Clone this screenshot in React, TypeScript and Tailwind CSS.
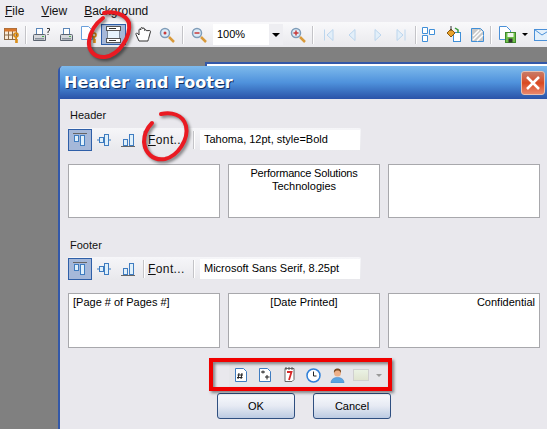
const ui = { fontFamily: '"Liberation Sans", "DejaVu Sans", sans-serif' };

function Sep({ className = "" }: { className?: string }) {
  return <div className={`w-[2px] h-[18px] bg-[#c4c4c8] border-r border-white shrink-0 ${className}`} />;
}

function Icon({ w = 16, h = 16, className = "", children }: { w?: number; h?: number; className?: string; children: React.ReactNode }) {
  return (
    <svg width={w} height={h} viewBox={`0 0 ${w} ${h}`} className={`shrink-0 ${className}`}>
      {children}
    </svg>
  );
}

const Key = ({ x = 0, y = 0 }: { x?: number; y?: number }) => (
  <g transform={`translate(${x} ${y})`} fill="none" stroke="#d98a10" strokeWidth="1.6">
    <circle cx="3" cy="3" r="2" />
    <path d="M3 5v6M3 8h2M3 10h2" />
  </g>
);

function Printer({ help = false }: { help?: boolean }) {
  return (
    <Icon w={18} h={16}>
      <rect x="3.500" y="1.500" width="6" height="6" fill="#fff" stroke="#5b86b8" />
      <path d="M1.500 7.500h10a1 1 0 0 1 1 1v5h-12v-5a1 1 0 0 1 1-1z" fill="#d6d8dc" stroke="#5c6470" />
      <rect x="2" y="11" width="9" height="1.500" fill="#8a929c" />
      <rect x="9" y="9" width="2" height="1" fill="#49b049" />
      {help && <path d="M14 1.500h2.500v2l-1.500 1v1.500M15 7v1" fill="none" stroke="#333" strokeWidth="1" />}
    </Icon>
  );
}

function MainToolbar() {
  return (
    <div className="h-[25px] flex items-center bg-gradient-to-b from-[#f9f9fb] to-[#e9e9ed] pl-[4px] overflow-hidden">
      <Icon w={16} h={16} className="mr-[5px]">
        <rect x="0.500" y="1.500" width="12" height="11" fill="#f8ead8" stroke="#8c6a48" />
        <path d="M0.500 8h12M4.500 1.500v11M8.500 1.500v11" stroke="#8c6a48" fill="none" />
        <rect x="0.500" y="1.500" width="12" height="3" fill="#d9772b" />
        <Key x={9} y={5} />
      </Icon>
      <Sep className="mr-[6px]" />
      <Printer help />
      <div className="w-[9px] shrink-0" />
      <Printer />
      <div className="w-[3px] shrink-0" />
      <Icon w={17} h={18} className="mr-[3px]">
        <path d="M0.500 0.500h7l4 4v9h-11z" fill="#fff" stroke="#6aa0dc" />
        <Key x={10} y={6} />
      </Icon>
      <div className="w-[25px] h-[21px] bg-[#a5b8d9] border border-[#2f5fa8] flex items-center justify-center shrink-0 mr-[9px]">
        <Icon w={15} h={17}>
          <rect x="1.500" y="0.500" width="12" height="16" fill="#e6f3fc" stroke="#7d8896" />
          <rect x="0.500" y="0.500" width="14" height="4" fill="#fff" stroke="#555" />
          <rect x="0.500" y="12.500" width="14" height="4" fill="#fff" stroke="#555" />
          <path d="M3 2.500h7M3 14.500h7" stroke="#333" />
        </Icon>
      </div>
      <Icon w={17} h={17} className="mr-[7px]">
        <path d="M4 15 1 8.500c-.6-1.400 1-2 1.800-.8L4 9V4c0-1.300 1.700-1.300 1.800 0V2.500c0-1.300 1.900-1.300 2 0V3c0-1.300 1.800-1.200 1.900.1V4.500c.2-1.200 1.800-1 1.800.2L14 4.600c1-.3 1.700.3 1.400 1.400L14 11c-.4 2-1 3-1 4z" fill="#fff" stroke="#333" />
      </Icon>
      <Icon w={16} h={16} className="mr-[7px]">
        <circle cx="6" cy="6" r="4.500" fill="#dcecf8" stroke="#7f9cb8" strokeWidth="1.500" />
        <circle cx="6" cy="6" r="1.500" fill="#c83a3a" />
        <path d="m10 10 5 5" stroke="#d99a3a" strokeWidth="2.500" />
      </Icon>
      <Sep className="mr-[7px]" />
      <Icon w={16} h={16} className="mr-[6px]">
        <circle cx="6" cy="6" r="4.500" fill="#dcecf8" stroke="#7f9cb8" strokeWidth="1.500" />
        <path d="M3.500 6h5" stroke="#c83a3a" strokeWidth="1.500" />
        <path d="m10 10 5 5" stroke="#d99a3a" strokeWidth="2.500" />
      </Icon>
      <div className="w-[70px] h-[21px] bg-white flex items-center justify-between shrink-0 mr-[7px]">
        <span className="pl-[4px] text-[11px] text-black">100%</span>
        <div className="w-[14px] h-full bg-[#eeeef2] flex items-center justify-center">
          <div className="w-0 h-0 border-x-[4px] border-x-transparent border-t-[4px] border-t-black" />
        </div>
      </div>
      <Icon w={16} h={16} className="mr-[6px]">
        <circle cx="6" cy="6" r="4.500" fill="#dcecf8" stroke="#7f9cb8" strokeWidth="1.500" />
        <path d="M3.500 6h5M6 3.500v5" stroke="#c83a3a" strokeWidth="1.500" />
        <path d="m10 10 5 5" stroke="#d99a3a" strokeWidth="2.500" />
      </Icon>
      <Sep className="mr-[10px]" />
      <Icon w={10} h={14} className="mr-[14px]">
        <path d="M0.500 1.500v11" stroke="#bcd6ee" />
        <path d="M9 1.500v11L3 7z" fill="#e3eff9" stroke="#bcd6ee" />
      </Icon>
      <Icon w={8} h={14} className="mr-[18px]">
        <path d="M7 1.500v11L1 7z" fill="#e3eff9" stroke="#bcd6ee" />
      </Icon>
      <Icon w={8} h={14} className="mr-[14px]">
        <path d="M1 1.500v11L7 7z" fill="#e3eff9" stroke="#bcd6ee" />
      </Icon>
      <Icon w={10} h={14} className="mr-[9px]">
        <path d="M9 1.500v11" stroke="#bcd6ee" />
        <path d="M1 1.500v11L7 7z" fill="#e3eff9" stroke="#bcd6ee" />
      </Icon>
      <Sep className="mr-[5px]" />
      <Icon w={14} h={16} className="mr-[10px]">
        <path d="M0.500 0.500h5v6h-5zM7.500 2.500h5v5h-5zM0.500 8.500h5v6h-5z" fill="#fff" stroke="#3f8fd8" />
      </Icon>
      <Icon w={16} h={17} className="mr-[9px]">
        <rect x="7.500" y="6.500" width="7" height="9" fill="#fff" stroke="#3f8fd8" />
        <path d="M5 3 1 7l4 4 4-4z" fill="#e8a22c" stroke="#8a5a10" />
        <path d="M5 0v5" stroke="#333" />
        <path d="M9 2l3 2v3" stroke="#3a9a3a" fill="none" strokeWidth="1.500" />
      </Icon>
      <Icon w={13} h={14} className="mr-[6px]">
        <path d="M0.500 0.500h9l3 3v10h-12z" fill="#c8c8c8" stroke="#3f8fd8" />
        <path d="M2 8l6-6M2 12l9-9M6 13l6-6" stroke="#fff" strokeWidth="1.500" />
      </Icon>
      <Sep className="mr-[7px]" />
      <Icon w={17} h={17} className="mr-[6px]">
        <path d="M0.500 0.500h7l4 4v9h-11z" fill="#fff" stroke="#4a90d8" />
        <rect x="6.500" y="6.500" width="10" height="10" fill="#6fc04a" stroke="#3f8a2a" />
        <rect x="8.500" y="7" width="6" height="4" fill="#f0f7ec" />
        <rect x="9.500" y="12.500" width="4" height="4" fill="#333" />
      </Icon>
      <div className="w-0 h-0 border-x-[3px] border-x-transparent border-t-[3px] border-t-black mr-[6px] shrink-0" />
      <Icon w={16} h={12}>
        <rect x="0.500" y="0.500" width="20" height="11" fill="#e3f0fb" stroke="#4a90d8" />
        <path d="M0.500 0.500 8 6l8-5" fill="none" stroke="#4a90d8" />
      </Icon>
    </div>
  );
}

function AlignIcons() {
  return (
    <>
      <div className="w-[24px] h-[22px] bg-[#a5b8d9] border border-[#2f5fa8] flex items-center justify-center">
        <Icon w={14} h={14}>
          <path d="M0 0.500h14" stroke="#666" />
          <rect x="1.500" y="2.500" width="4" height="6" fill="#dff0fb" stroke="#3f7cc0" />
          <rect x="7.500" y="2.500" width="4" height="10" fill="#dff0fb" stroke="#3f7cc0" />
        </Icon>
      </div>
      <div className="w-[24px] h-[22px] flex items-center justify-center">
        <Icon w={14} h={14}>
          <path d="M0 7h14" stroke="#3f7cc0" />
          <rect x="2.500" y="4.500" width="4" height="5" fill="#dff0fb" stroke="#3f7cc0" />
          <rect x="7.500" y="1.500" width="4" height="11" fill="#dff0fb" stroke="#3f7cc0" />
        </Icon>
      </div>
      <div className="w-[24px] h-[22px] flex items-center justify-center">
        <Icon w={14} h={14}>
          <path d="M0 13.500h14" stroke="#666" />
          <rect x="2.500" y="6.500" width="4" height="6" fill="#dff0fb" stroke="#3f7cc0" />
          <rect x="8.500" y="1.500" width="4" height="11" fill="#dff0fb" stroke="#3f7cc0" />
        </Icon>
      </div>
    </>
  );
}

function FontBar({ label, mt }: { label: string; mt: string }) {
  return (
    <div className={`w-[293px] h-[23px] flex items-center rounded-[2px] bg-gradient-to-b from-[#f6f6f9] to-[#e8e8ec] ${mt}`}>
      <AlignIcons />
      <Sep className="ml-[3px] mr-[3px]" />
      <span className="w-[44px] text-[12px] tracking-[0.4px] text-[#111]">
        <u>F</u>ont...
      </span>
      <Sep className="mr-[5px] ml-[1px]" />
      <div className="w-[160px] h-[20px] bg-white flex items-center pl-[4px] text-[11px] text-black">{label}</div>
    </div>
  );
}

function Box({ align = "text-left", height = "h-[55px]", children }: { align?: string; height?: string; children?: React.ReactNode }) {
  return (
    <div className={`w-[152px] ${height} bg-white border border-[#a8a8ac] px-[4px] pt-[2px] text-[11px] leading-[13px] text-black ${align}`}>
      {children}
    </div>
  );
}

function Dialog() {
  return (
    <div className="absolute left-[58px] top-[66px] w-[489px] h-[363px] bg-[#e9e8ed] border-l-2 border-[#3358a8] rounded-tl-[5px] overflow-hidden">
      <div className="h-[33px] flex items-center justify-between bg-gradient-to-b from-[#7ebaec] via-[#4f92dc] to-[#2b53a8] pl-[4px] pr-[2px]">
        <span className="text-[16px] font-bold text-white [text-shadow:1px_1px_0_#12305f]" style={{ fontFamily: '"DejaVu Sans", sans-serif' }}>
          Header and Footer
        </span>
        <div className="w-[24px] h-[24px] rounded-[3px] border border-[#e8c0b0] bg-gradient-to-b from-[#c77a66] via-[#d9491f] to-[#e8866a] flex items-center justify-center">
          <svg width="16" height="16" viewBox="0 0 16 16">
            <path d="m2 2 12 12M14 2 2 14" stroke="#fff" strokeWidth="2.500" />
          </svg>
        </div>
      </div>
      <div className="pl-[8px]">
        <div className="pl-[2px] pt-[9px] text-[11px] leading-[14px] text-[#111]">Header</div>
        <FontBar label="Tahoma, 12pt, style=Bold" mt="mt-[6px]" />
        <div className="flex gap-[8px] mt-[13px]">
          <Box height="h-[54px]" />
          <Box height="h-[54px]" align="text-center">
            <span className="tracking-[-0.2px]">Performance Solutions</span>
            <br />
            Technologies
          </Box>
          <Box height="h-[54px]" />
        </div>
        <div className="pl-[2px] pt-[20px] text-[11px] leading-[14px] text-[#111]">Footer</div>
        <FontBar label="Microsoft Sans Serif, 8.25pt" mt="mt-[5px]" />
        <div className="flex gap-[8px] mt-[13px]">
          <Box>[Page # of Pages #]</Box>
          <Box align="text-center">[Date Printed]</Box>
          <Box align="text-right">Confidential</Box>
        </div>
        <div className="flex items-center w-[472px] h-[24px] mt-[15px]">
          <div className="flex items-center ml-[161px] pl-[6px] pr-[6px] h-[24px] bg-[#e6e6ea]">
            <Icon w={12} h={14} className="mr-[12px]">
              <path d="M0.500 0.500h8l3 3v10h-11z" fill="#fff" stroke="#3f7cc0" />
              <path d="M4 5 3 11M7 5l-1 6M2.500 7H8M2 9.500h5.500" stroke="#222" />
            </Icon>
            <Icon w={12} h={14} className="mr-[12px]">
              <path d="M0.500 0.500h8l3 3v10h-11z" fill="#fff" stroke="#3f7cc0" />
              <path d="M2 4h4M4 2.500v3M6 9h4.500M8 7v4.500" stroke="#222" />
            </Icon>
            <Icon w={13} h={16} className="mr-[10px]">
              <path d="M2 1.500h9v11l-2 2H2z" fill="#fff" stroke="#666" />
              <path d="M3 0v3M6 0v3M9 0v3" stroke="#555" />
              <path d="M4 5h4.500L6 13" fill="none" stroke="#d62828" strokeWidth="1.800" />
            </Icon>
            <Icon w={15} h={15} className="mr-[9px]">
              <circle cx="7.500" cy="7.500" r="6.500" fill="#fff" stroke="#2f7fd8" strokeWidth="1.500" />
              <path d="M7.500 3.500v4.500h3" fill="none" stroke="#222" />
            </Icon>
            <Icon w={15} h={15} className="mr-[8px]">
              <path d="M1 15c0-4 3-5.500 6.500-5.500S14 11 14 15z" fill="#5aa4e0" stroke="#3f7cc0" strokeWidth="0.500" />
              <circle cx="7.500" cy="5" r="3.500" fill="#eeb088" />
              <path d="M4 5c-.5-3.500 1.500-4.500 3.500-4.500s4 1 3.500 4.500c-1-2-2-2.500-3.500-2.500S5 3 4 5z" fill="#7a4a20" />
            </Icon>
            <div className="w-[16px] h-[12px] bg-gradient-to-b from-[#eaf2e4] to-[#e0e4d0] border border-[#d0d0d0] mr-[7px]" />
            <div className="w-0 h-0 border-x-[3px] border-x-transparent border-t-[3px] border-t-[#999]" />
          </div>
        </div>
        <div className="flex gap-[18px] pl-[149px] mt-[6px]">
          {["OK", "Cancel"].map((b) => (
            <button key={b} className="w-[78px] h-[26px] rounded-[3px] border border-[#2f4f80] bg-gradient-to-b from-[#f8fafd] via-[#e6eaf3] to-[#bccbe2] text-[11px] text-black">
              {b}
            </button>
          ))}
        </div>
      </div>
    </div>
  );
}

const circleA = "M104 13c10-2 22 1 25 10 2 14-10 32-24 34-12 1-17-8-16-16 1-8 6-17 14-23";
const circleB = "M161 114c10-2 22 0 25 12 3 13-8 30-21 33-12 2-20-6-21-17 0-8 3-14 8-19";

function Annotations() {
  return (
    <svg width="547" height="429" className="absolute inset-0 pointer-events-none">
      <g className="blur-[1.5px]" fill="none" strokeLinecap="round" stroke="#000" strokeOpacity="0.45" strokeWidth="4">
        <path d={circleA} transform="translate(2 2)" />
        <path d={circleB} transform="translate(2 2)" />
        <rect x="213" y="362" width="179" height="29" strokeLinecap="butt" />
      </g>
      <g fill="none" strokeLinecap="round" stroke="#ea1a22" strokeWidth="4">
        <path d={circleA} />
        <path d={circleB} />
      </g>
      <rect x="211" y="360" width="179" height="29" fill="none" stroke="#f00000" strokeWidth="4" />
    </svg>
  );
}

export default function App() {
  return (
    <div className="relative w-[547px] h-[429px] overflow-hidden bg-[#808080]" style={ui}>
      <div className="h-[22px] flex items-center gap-[17px] pl-[5px] bg-[#edecf1] text-[12px] text-[#111]">
        <span><u>F</u>ile</span>
        <span><u>V</u>iew</span>
        <span><u>B</u>ackground</span>
      </div>
      <MainToolbar />
      <div className="absolute left-[205px] top-[62px] w-[342px] h-[8px] bg-white border-t-2 border-l-2 border-[#3358a8]" />
      <Dialog />
      <Annotations />
    </div>
  );
}
